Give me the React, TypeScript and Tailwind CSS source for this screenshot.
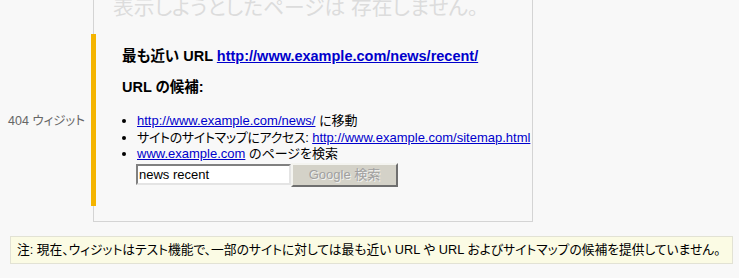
import React from "react";

const jp = "font-['Liberation_Sans','Noto_Sans_CJK_JP',sans-serif] [font-feature-settings:'palt']";

export default function App() {
  return (
    <div className={`w-[739px] h-[278px] overflow-hidden bg-[#f8f8f8] text-black ${jp}`}>
      <div className="flex">
        <div className="w-[93px] shrink-0 pt-[113px] pl-[8px] text-[12.5px] leading-[16px] text-[#666] whitespace-nowrap">
          404 ウィジット
        </div>

        <div className="w-[440px] h-[222px] shrink-0 border-x border-b border-[#d4d4d4] bg-[#f8f8f8]">
          <div className="h-[34px] overflow-hidden pl-[19px]">
            <div className="-mt-[3px] text-[20.75px] leading-[21px] text-[#dcdcdc] whitespace-nowrap">
              表示しようとしたページは 存在しません。
            </div>
          </div>

          <div className="-ml-[3px] h-[172px] border-l-[5px] border-[#f4b400] pl-[26px] pt-[14px] text-[13px] whitespace-nowrap">
            <div className="text-[14.5px] font-bold leading-[17px]">
              最も近い URL{" "}
              <a href="#" className="text-[#0000cc] underline">
                http://www.example.com/news/recent/
              </a>
            </div>
            <div className="mt-[14px] text-[14.5px] font-bold leading-[17px]">URL の候補:</div>

            <ul className="mt-[17px] list-disc pl-[15px] leading-[16.5px]">
              <li>
                <a href="#" className="text-[#0000cc] underline">
                  http://www.example.com/news/
                </a>{" "}
                に移動
              </li>
              <li>
                <span className="tracking-[-0.35px]">サイトのサイトマップにアクセス:</span>{" "}
                <a href="#" className="text-[#0000cc] underline">
                  http://www.example.com/sitemap.html
                </a>
              </li>
              <li>
                <a href="#" className="text-[#0000cc] underline">
                  www.example.com
                </a>{" "}
                のページを検索
              </li>
            </ul>

            <div className="flex items-center pl-[14px]">
              <div className="flex h-[21px] w-[155px] items-center border-2 border-t-[#808080] border-l-[#808080] border-b-[#e4e4e4] border-r-[#e4e4e4] bg-white px-[1px] text-[13px] leading-[16px]">
                news recent
              </div>
              <button className="flex h-[24px] w-[107px] items-center justify-center border-2 border-t-[#f4f4f0] border-l-[#f4f4f0] border-b-[#6f6f6f] border-r-[#6f6f6f] bg-[#d4d2c8] text-[13px] text-[#a0a0a0] [text-shadow:1px_1px_0_#f2f2f2]">
                Google 検索
              </button>
            </div>
          </div>
        </div>
      </div>

      <div className="ml-[10px] mt-[14px] flex h-[28px] w-[723px] items-center border border-[#e2e2d4] bg-[#fbfbe4] pl-[6px] text-[12.75px] whitespace-nowrap">
        注: 現在、ウィジットはテスト機能で、一部のサイトに対しては最も近い URL や URL およびサイトマップの候補を提供していません。
      </div>
    </div>
  );
}
